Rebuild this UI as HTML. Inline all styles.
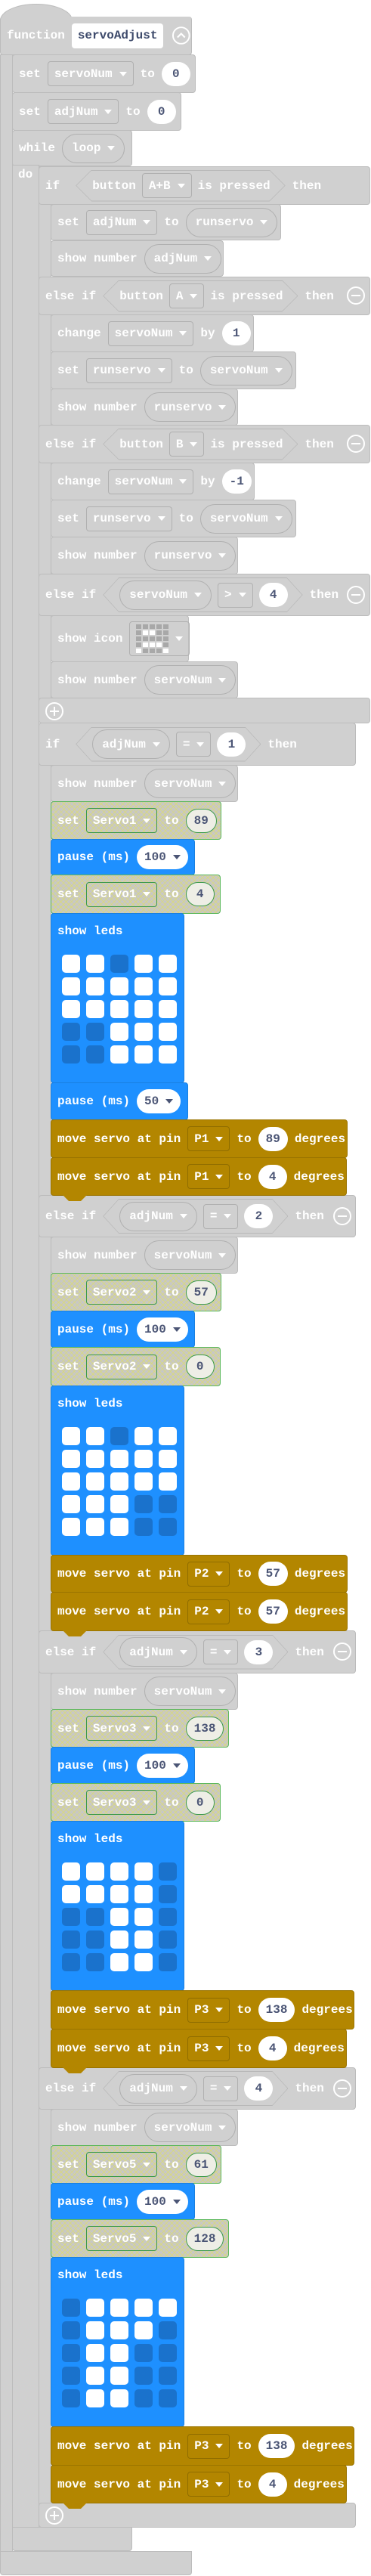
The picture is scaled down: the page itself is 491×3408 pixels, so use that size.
<!DOCTYPE html>
<html><head><meta charset="utf-8">
<style>
body{margin:0;width:491px;height:3408px;position:relative;background:#fff;font:bold 16px "Liberation Mono",monospace;color:#fff;overflow:hidden}
.g{position:absolute;background:#d0d0d0;border:1px solid #bcbcbc;box-sizing:border-box;border-radius:4px}
.b{position:absolute;box-sizing:border-box;display:flex;align-items:center;gap:9px;padding-left:8px;background:#d0d0d0;border:1px solid #bcbcbc;border-radius:4px;white-space:nowrap}
.dd{height:33px;border:1px solid #b0b0b0;border-radius:4px;display:flex;align-items:center;padding:0 8px;box-sizing:border-box}
.vp{height:39px;border:1px solid #b0b0b0;border-radius:20px;display:flex;align-items:center;padding:0 12px;box-sizing:border-box}
.n{height:32px;min-width:38px;background:#fff;border-radius:16px;color:#4b5575;display:flex;align-items:center;justify-content:center;padding:0 10px;box-sizing:border-box}
.ar{display:inline-block;width:0;height:0;border-left:5px solid transparent;border-right:5px solid transparent;border-top:6px solid #fff;margin-left:9px}
.n .ar{border-top-color:#4b5575}
.h{background-color:#c8c8c4;background-image:repeating-linear-gradient(45deg,transparent 0 4px,rgba(225,225,90,.55) 4px 5px),repeating-linear-gradient(-45deg,transparent 0 4px,rgba(225,225,90,.55) 4px 5px);border-color:#5cb85c}
.h .dd{border-color:#3c9a4c}
.h .n{background:#eeeee6;border:1px solid #3c9a4c}
.bl{background:#1e90ff;border-color:#1a80e0}
.m{background:#b38600;border-color:#9a7400}
.m .dd{border-color:#8f6d00}
.t{z-index:1}
.t::after{content:'';position:absolute;left:15px;bottom:-8px;width:32px;height:8px;background:inherit;clip-path:polygon(0 0,100% 0,75% 100%,25% 100%)}
.hex{position:relative;isolation:isolate;height:42px;display:flex;align-items:center;gap:8px;padding:0 20px 0 22px;margin-left:12px}
.hex::before{content:'';position:absolute;z-index:-1;inset:0;background:#b8b8b8;clip-path:polygon(21px 0,calc(100% - 21px) 0,100% 50%,calc(100% - 21px) 100%,21px 100%,0 50%)}
.hex::after{content:'';position:absolute;z-index:-1;inset:1px;background:#d0d0d0;clip-path:polygon(20px 0,calc(100% - 20px) 0,100% 50%,calc(100% - 20px) 100%,20px 100%,0 50%)}
.circ{position:absolute;width:20px;height:20px;border:2px solid #fff;border-radius:50%;box-sizing:content-box}
.circ i{position:absolute;left:4px;top:9px;width:12px;height:2px;background:#fff}
.circ b{position:absolute;left:9px;top:4px;width:2px;height:12px;background:#fff}
.leds{position:absolute;left:14px;top:54px}
.leds span{position:absolute;width:24px;height:24px;border-radius:5px;background:#fff}
.leds span.d{background:#1a72cc}
.lbl{position:absolute;left:8px;top:14px}
.ic{display:grid;grid-template-columns:repeat(5,7px);gap:2px}
.ic s{width:7px;height:6px;background:#a8a8a8;text-decoration:none}
.ic s.w{background:#fff}
</style></head><body>

<!-- function chain -->
<div class="g" style="left:0;top:5px;width:96px;height:40px;border-radius:48px 48px 0 0/22px 22px 0 0;border-bottom:none"></div>
<div class="b" style="left:0;top:22px;width:254px;height:51px;border-top:none">function<span style="background:#fff;color:#3d4a6b;height:33px;padding:0 8px;display:flex;align-items:center;border-radius:4px">servoAdjust</span>
<svg width="26" height="26" viewBox="0 0 26 26" style="margin-left:2px"><circle cx="13" cy="13" r="11" fill="none" stroke="#fff" stroke-width="2"/><path d="M8 15.5 L13 10.5 L18 15.5" fill="none" stroke="#fff" stroke-width="2.2"/></svg></div>
<div class="g" style="left:0;top:72px;width:17px;height:3305px;border-radius:0"></div>
<div class="g" style="left:0;top:3375px;width:254px;height:32px;border-radius:0 0 4px 4px"></div>

<div class="b" style="left:16px;top:72px;width:243px;height:51px">set<span class="dd">servoNum<span class="ar"></span></span>to<span class="n">0</span></div>
<div class="b" style="left:16px;top:122px;width:224px;height:51px">set<span class="dd">adjNum<span class="ar"></span></span>to<span class="n">0</span></div>

<!-- while -->
<div class="b" style="left:16px;top:172px;width:159px;height:48px">while<span class="vp">loop<span class="ar"></span></span></div>
<div class="g" style="left:16px;top:218px;width:36px;height:3127px;border-radius:0"></div>
<div style="position:absolute;left:24px;top:222px">do</div>
<div class="g" style="left:16px;top:3343px;width:159px;height:32px;border-radius:0 0 4px 4px"></div>

<!-- if chain 1 -->
<div class="g" style="left:51px;top:220px;width:17px;height:720px;border-radius:0"></div>
<div class="b" style="left:51px;top:220px;width:439px;height:51px">if<span class="hex">button<span class="dd">A+B<span class="ar"></span></span>is pressed</span>then</div>
<div class="b" style="left:51px;top:366px;width:439px;height:51px">else if<span class="hex" style="margin-left:0">button<span class="dd">A<span class="ar"></span></span>is pressed</span>then<span class="circ" style="left:407px;top:12px"><i></i></span></div>
<div class="b" style="left:51px;top:562px;width:439px;height:51px">else if<span class="hex" style="margin-left:0">button<span class="dd">B<span class="ar"></span></span>is pressed</span>then<span class="circ" style="left:407px;top:12px"><i></i></span></div>
<div class="b" style="left:51px;top:759px;width:439px;height:56px">else if<span class="hex" style="margin-left:0;height:46px"><span class="vp">servoNum<span class="ar"></span></span><span class="dd">&gt;<span class="ar"></span></span><span class="n">4</span></span>then<span class="circ" style="left:407px;top:15px"><i></i></span></div>
<div class="g" style="left:51px;top:923px;width:439px;height:34px"></div>
<span class="circ" style="left:60px;top:929px"><i></i><b></b></span>

<div class="b" style="left:67px;top:270px;width:305px;height:48px">set<span class="dd">adjNum<span class="ar"></span></span>to<span class="vp">runservo<span class="ar"></span></span></div>
<div class="b" style="left:67px;top:318px;width:229px;height:48px">show number<span class="vp">adjNum<span class="ar"></span></span></div>
<div class="b" style="left:67px;top:416px;width:269px;height:50px">change<span class="dd">servoNum<span class="ar"></span></span>by<span class="n">1</span></div>
<div class="b" style="left:67px;top:465px;width:325px;height:50px">set<span class="dd">runservo<span class="ar"></span></span>to<span class="vp">servoNum<span class="ar"></span></span></div>
<div class="b" style="left:67px;top:514px;width:248px;height:49px">show number<span class="vp">runservo<span class="ar"></span></span></div>
<div class="b" style="left:67px;top:612px;width:270px;height:50px">change<span class="dd">servoNum<span class="ar"></span></span>by<span class="n">-1</span></div>
<div class="b" style="left:67px;top:661px;width:325px;height:50px">set<span class="dd">runservo<span class="ar"></span></span>to<span class="vp">servoNum<span class="ar"></span></span></div>
<div class="b" style="left:67px;top:710px;width:248px;height:50px">show number<span class="vp">runservo<span class="ar"></span></span></div>
<div class="b" style="left:67px;top:814px;width:183px;height:62px">show icon<span class="dd" style="height:46px;padding:0 8px 0 8px"><span class="ic"><s></s><s></s><s></s><s></s><s></s><s></s><s class="w"></s><s class="w"></s><s></s><s></s><s></s><s></s><s></s><s></s><s></s><s></s><s class="w"></s><s class="w"></s><s class="w"></s><s></s><s class="w"></s><s></s><s></s><s></s><s class="w"></s></span><span class="ar"></span></span></div>
<div class="b" style="left:67px;top:875px;width:248px;height:49px">show number<span class="vp">servoNum<span class="ar"></span></span></div>

<!-- if chain 2 -->
<div class="g" style="left:51px;top:1000px;width:17px;height:2330px;border-radius:0"></div>
<div class="b" style="left:51px;top:956px;width:420px;height:57px">if<span class="hex" style="height:46px"><span class="vp">adjNum<span class="ar"></span></span><span class="dd">=<span class="ar"></span></span><span class="n">1</span></span>then</div>
<div class="b" style="left:51px;top:1581px;width:420px;height:56px">else if<span class="hex" style="margin-left:0;height:46px"><span class="vp">adjNum<span class="ar"></span></span><span class="dd">=<span class="ar"></span></span><span class="n">2</span></span>then<span class="circ" style="left:389px;top:15px"><i></i></span></div>
<div class="b" style="left:51px;top:2157px;width:420px;height:57px">else if<span class="hex" style="margin-left:0;height:46px"><span class="vp">adjNum<span class="ar"></span></span><span class="dd">=<span class="ar"></span></span><span class="n">3</span></span>then<span class="circ" style="left:389px;top:15px"><i></i></span></div>
<div class="b" style="left:51px;top:2735px;width:420px;height:56px">else if<span class="hex" style="margin-left:0;height:46px"><span class="vp">adjNum<span class="ar"></span></span><span class="dd">=<span class="ar"></span></span><span class="n">4</span></span>then<span class="circ" style="left:389px;top:15px"><i></i></span></div>
<div class="g" style="left:51px;top:3311px;width:420px;height:33px"></div>
<span class="circ" style="left:60px;top:3316px"><i></i><b></b></span>

<!-- section 1 -->
<div class="b" style="left:67px;top:1012px;width:248px;height:49px">show number<span class="vp">servoNum<span class="ar"></span></span></div>
<div class="b h t" style="left:67px;top:1060px;width:226px;height:51px">set<span class="dd">Servo1<span class="ar"></span></span>to<span class="n">89</span></div>
<div class="b bl t" style="left:67px;top:1110px;width:191px;height:48px">pause (ms)<span class="n">100<span class="ar"></span></span></div>
<div class="b h t" style="left:67px;top:1157px;width:225px;height:52px">set<span class="dd">Servo1<span class="ar"></span></span>to<span class="n">4</span></div>
<div class="b bl t" style="left:67px;top:1208px;width:177px;height:225px;display:block"><span class="lbl">show leds</span><div class="leds">
<span style="left:0;top:0"></span><span style="left:32px;top:0"></span><span class="d" style="left:64px;top:0"></span><span style="left:96px;top:0"></span><span style="left:128px;top:0"></span>
<span style="left:0;top:30px"></span><span style="left:32px;top:30px"></span><span style="left:64px;top:30px"></span><span style="left:96px;top:30px"></span><span style="left:128px;top:30px"></span>
<span style="left:0;top:60px"></span><span style="left:32px;top:60px"></span><span style="left:64px;top:60px"></span><span style="left:96px;top:60px"></span><span style="left:128px;top:60px"></span>
<span class="d" style="left:0;top:90px"></span><span class="d" style="left:32px;top:90px"></span><span style="left:64px;top:90px"></span><span style="left:96px;top:90px"></span><span style="left:128px;top:90px"></span>
<span class="d" style="left:0;top:120px"></span><span class="d" style="left:32px;top:120px"></span><span style="left:64px;top:120px"></span><span style="left:96px;top:120px"></span><span style="left:128px;top:120px"></span>
</div></div>
<div class="b bl t" style="left:67px;top:1432px;width:182px;height:50px">pause (ms)<span class="n">50<span class="ar"></span></span></div>
<div class="b m t" style="left:67px;top:1481px;width:393px;height:51px">move servo at pin<span class="dd">P1<span class="ar"></span></span>to<span class="n">89</span>degrees</div>
<div class="b m t" style="left:67px;top:1531px;width:392px;height:51px">move servo at pin<span class="dd">P1<span class="ar"></span></span>to<span class="n">4</span>degrees</div>

<!-- section 2 -->
<div class="b" style="left:67px;top:1636px;width:248px;height:49px">show number<span class="vp">servoNum<span class="ar"></span></span></div>
<div class="b h t" style="left:67px;top:1684px;width:226px;height:51px">set<span class="dd">Servo2<span class="ar"></span></span>to<span class="n">57</span></div>
<div class="b bl t" style="left:67px;top:1734px;width:191px;height:49px">pause (ms)<span class="n">100<span class="ar"></span></span></div>
<div class="b h t" style="left:67px;top:1782px;width:225px;height:52px">set<span class="dd">Servo2<span class="ar"></span></span>to<span class="n">0</span></div>
<div class="b bl t" style="left:67px;top:1833px;width:177px;height:225px;display:block"><span class="lbl">show leds</span><div class="leds">
<span style="left:0;top:0"></span><span style="left:32px;top:0"></span><span class="d" style="left:64px;top:0"></span><span style="left:96px;top:0"></span><span style="left:128px;top:0"></span>
<span style="left:0;top:30px"></span><span style="left:32px;top:30px"></span><span style="left:64px;top:30px"></span><span style="left:96px;top:30px"></span><span style="left:128px;top:30px"></span>
<span style="left:0;top:60px"></span><span style="left:32px;top:60px"></span><span style="left:64px;top:60px"></span><span style="left:96px;top:60px"></span><span style="left:128px;top:60px"></span>
<span style="left:0;top:90px"></span><span style="left:32px;top:90px"></span><span style="left:64px;top:90px"></span><span class="d" style="left:96px;top:90px"></span><span class="d" style="left:128px;top:90px"></span>
<span style="left:0;top:120px"></span><span style="left:32px;top:120px"></span><span style="left:64px;top:120px"></span><span class="d" style="left:96px;top:120px"></span><span class="d" style="left:128px;top:120px"></span>
</div></div>
<div class="b m t" style="left:67px;top:2057px;width:393px;height:50px">move servo at pin<span class="dd">P2<span class="ar"></span></span>to<span class="n">57</span>degrees</div>
<div class="b m t" style="left:67px;top:2106px;width:393px;height:52px">move servo at pin<span class="dd">P2<span class="ar"></span></span>to<span class="n">57</span>degrees</div>

<!-- section 3 -->
<div class="b" style="left:67px;top:2213px;width:248px;height:49px">show number<span class="vp">servoNum<span class="ar"></span></span></div>
<div class="b h t" style="left:67px;top:2261px;width:236px;height:51px">set<span class="dd">Servo3<span class="ar"></span></span>to<span class="n">138</span></div>
<div class="b bl t" style="left:67px;top:2311px;width:191px;height:49px">pause (ms)<span class="n">100<span class="ar"></span></span></div>
<div class="b h t" style="left:67px;top:2359px;width:225px;height:51px">set<span class="dd">Servo3<span class="ar"></span></span>to<span class="n">0</span></div>
<div class="b bl t" style="left:67px;top:2409px;width:177px;height:225px;display:block"><span class="lbl">show leds</span><div class="leds">
<span style="left:0;top:0"></span><span style="left:32px;top:0"></span><span style="left:64px;top:0"></span><span style="left:96px;top:0"></span><span class="d" style="left:128px;top:0"></span>
<span style="left:0;top:30px"></span><span style="left:32px;top:30px"></span><span style="left:64px;top:30px"></span><span style="left:96px;top:30px"></span><span class="d" style="left:128px;top:30px"></span>
<span class="d" style="left:0;top:60px"></span><span class="d" style="left:32px;top:60px"></span><span style="left:64px;top:60px"></span><span style="left:96px;top:60px"></span><span class="d" style="left:128px;top:60px"></span>
<span class="d" style="left:0;top:90px"></span><span class="d" style="left:32px;top:90px"></span><span style="left:64px;top:90px"></span><span style="left:96px;top:90px"></span><span class="d" style="left:128px;top:90px"></span>
<span class="d" style="left:0;top:120px"></span><span class="d" style="left:32px;top:120px"></span><span style="left:64px;top:120px"></span><span style="left:96px;top:120px"></span><span class="d" style="left:128px;top:120px"></span>
</div></div>
<div class="b m t" style="left:67px;top:2633px;width:402px;height:52px">move servo at pin<span class="dd">P3<span class="ar"></span></span>to<span class="n">138</span>degrees</div>
<div class="b m t" style="left:67px;top:2684px;width:392px;height:52px">move servo at pin<span class="dd">P3<span class="ar"></span></span>to<span class="n">4</span>degrees</div>

<!-- section 4 -->
<div class="b" style="left:67px;top:2790px;width:248px;height:49px">show number<span class="vp">servoNum<span class="ar"></span></span></div>
<div class="b h t" style="left:67px;top:2838px;width:226px;height:51px">set<span class="dd">Servo5<span class="ar"></span></span>to<span class="n">61</span></div>
<div class="b bl t" style="left:67px;top:2888px;width:191px;height:49px">pause (ms)<span class="n">100<span class="ar"></span></span></div>
<div class="b h t" style="left:67px;top:2936px;width:236px;height:51px">set<span class="dd">Servo5<span class="ar"></span></span>to<span class="n">128</span></div>
<div class="b bl t" style="left:67px;top:2986px;width:177px;height:225px;display:block"><span class="lbl">show leds</span><div class="leds">
<span class="d" style="left:0;top:0"></span><span style="left:32px;top:0"></span><span style="left:64px;top:0"></span><span style="left:96px;top:0"></span><span style="left:128px;top:0"></span>
<span class="d" style="left:0;top:30px"></span><span style="left:32px;top:30px"></span><span style="left:64px;top:30px"></span><span style="left:96px;top:30px"></span><span class="d" style="left:128px;top:30px"></span>
<span class="d" style="left:0;top:60px"></span><span style="left:32px;top:60px"></span><span style="left:64px;top:60px"></span><span class="d" style="left:96px;top:60px"></span><span class="d" style="left:128px;top:60px"></span>
<span class="d" style="left:0;top:90px"></span><span style="left:32px;top:90px"></span><span style="left:64px;top:90px"></span><span class="d" style="left:96px;top:90px"></span><span class="d" style="left:128px;top:90px"></span>
<span class="d" style="left:0;top:120px"></span><span style="left:32px;top:120px"></span><span style="left:64px;top:120px"></span><span class="d" style="left:96px;top:120px"></span><span class="d" style="left:128px;top:120px"></span>
</div></div>
<div class="b m t" style="left:67px;top:3210px;width:402px;height:52px">move servo at pin<span class="dd">P3<span class="ar"></span></span>to<span class="n">138</span>degrees</div>
<div class="b m t" style="left:67px;top:3261px;width:392px;height:51px">move servo at pin<span class="dd">P3<span class="ar"></span></span>to<span class="n">4</span>degrees</div>

</body></html>
